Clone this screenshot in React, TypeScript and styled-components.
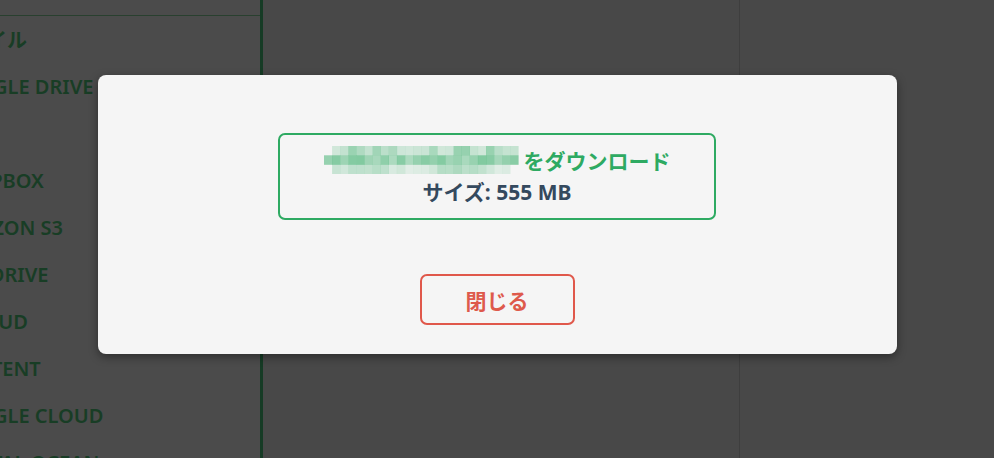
import React from "react";
import styled, { createGlobalStyle } from "styled-components";

const Global = createGlobalStyle`
  html, body { margin: 0; padding: 0; }
  body { font-family: "Noto Sans", "Noto Sans CJK JP", sans-serif; }
  #root { width: 994px; height: 458px; }
`;

const Page = styled.div`
  position: relative;
  width: 994px;
  height: 458px;
  overflow: hidden;
  display: flex;
  background: #484848;
`;

const Sidebar = styled.aside`
  flex: 0 0 316px;
  box-sizing: border-box;
  margin-left: -53px;
  background: #4b4b4b;
  border-right: 3px solid #163b25;
  display: flex;
  flex-direction: column;
  overflow: hidden;
`;

const SidebarHeader = styled.div`
  flex: 0 0 15px;
  border-bottom: 1px solid #29402f;
`;

const NavItem = styled.div`
  flex: 0 0 47px;
  display: flex;
  align-items: center;
  font-family: "Noto Sans", "Noto Sans CJK JP", sans-serif;
  font-weight: 600;
  font-size: 20px;
  color: #183d25;
  white-space: nowrap;
`;

const Main = styled.main`
  flex: 0 0 477px;
  box-sizing: border-box;
  background: #484848;
  border-right: 1px solid #3e3e3e;
`;

const RightPanel = styled.section`
  flex: 1;
  background: #484848;
`;

const Overlay = styled.div`
  position: absolute;
  inset: 0;
  display: flex;
  flex-direction: column;
  align-items: center;
  padding-top: 75px;
`;

const Modal = styled.div`
  width: 799px;
  height: 279px;
  box-sizing: border-box;
  background: #f5f5f5;
  border-radius: 8px;
  box-shadow: 0 3px 10px rgba(0, 0, 0, 0.4);
  display: flex;
  flex-direction: column;
  align-items: center;
  padding-top: 58px;
`;

const DownloadBox = styled.div`
  width: 438px;
  height: 87px;
  box-sizing: border-box;
  border: 2px solid #2eaa62;
  border-radius: 7px;
  padding: 8px 0 9px;
  display: flex;
  flex-direction: column;
  align-items: center;
`;

const Line = styled.div<{ $color: string; $shift?: number }>`
  height: 33px;
  margin-top: ${(p) => p.$shift ?? 0}px;
  display: flex;
  align-items: center;
  gap: 5px;
  font-family: "Noto Sans", "Noto Sans CJK JP", sans-serif;
  font-weight: 700;
  font-size: 21px;
  color: ${(p) => p.$color};
  white-space: nowrap;
`;

const CloseButton = styled.button`
  margin-top: 54px;
  width: 155px;
  height: 51px;
  box-sizing: border-box;
  background: transparent;
  border: 2px solid #e0584b;
  border-radius: 7px;
  color: #de5a4c;
  font-family: "Noto Sans CJK JP", "Noto Sans", sans-serif;
  font-weight: 700;
  font-size: 21px;
  cursor: pointer;
  padding: 0;
`;

function rnd(i: number) {
  const x = Math.sin(i * 12.9898 + 78.233) * 43758.5453;
  return x - Math.floor(x);
}

const Mosaic: React.FC = () => {
  const cols = 24;
  const rows = 3;
  const cw = 8.1;
  const rh = 9.3;
  const cells: React.ReactNode[] = [];
  for (let r = 0; r < rows; r++) {
    for (let c = 0; c < cols; c++) {
      const v = rnd(r * 31 + c * 7 + 3);
      if (r === 2 && (c === 0 || c === 23)) continue;
      if (r === 0 && c === 0) continue;
      const a = r === 1 ? 0.32 + v * 0.28 : r === 0 ? 0.18 + v * 0.3 : 0.1 + v * 0.28;
      cells.push(
        <rect
          key={`${r}-${c}`}
          x={c * cw}
          y={r * rh}
          width={cw + 0.2}
          height={rh + 0.2}
          fill={`rgba(46,170,98,${a.toFixed(2)})`}
        />
      );
    }
  }
  return (
    <svg width={195} height={28} viewBox="0 0 195 28" style={{ filter: "blur(0.7px)" }}>
      {cells}
    </svg>
  );
};

const navItems = [
  "ファイル",
  "GOOGLE DRIVE",
  "FTP",
  "DROPBOX",
  "AMAZON S3",
  "ONEDRIVE",
  "PCLOUD",
  "CONTENT",
  "GOOGLE CLOUD",
  "DIGITAL OCEAN",
];

export default function App() {
  return (
    <>
      <Global />
      <Page>
        <Sidebar>
          <SidebarHeader />
          {navItems.map((t) => (
            <NavItem key={t}>{t}</NavItem>
          ))}
        </Sidebar>
        <Main />
        <RightPanel />
        <Overlay>
          <Modal>
            <DownloadBox>
              <Line $color="#2eaa62">
                <Mosaic />
                <span>をダウンロード</span>
              </Line>
              <Line $color="#34495e" $shift={-2}>
                サイズ: 555 MB
              </Line>
            </DownloadBox>
            <CloseButton>閉じる</CloseButton>
          </Modal>
        </Overlay>
      </Page>
    </>
  );
}
